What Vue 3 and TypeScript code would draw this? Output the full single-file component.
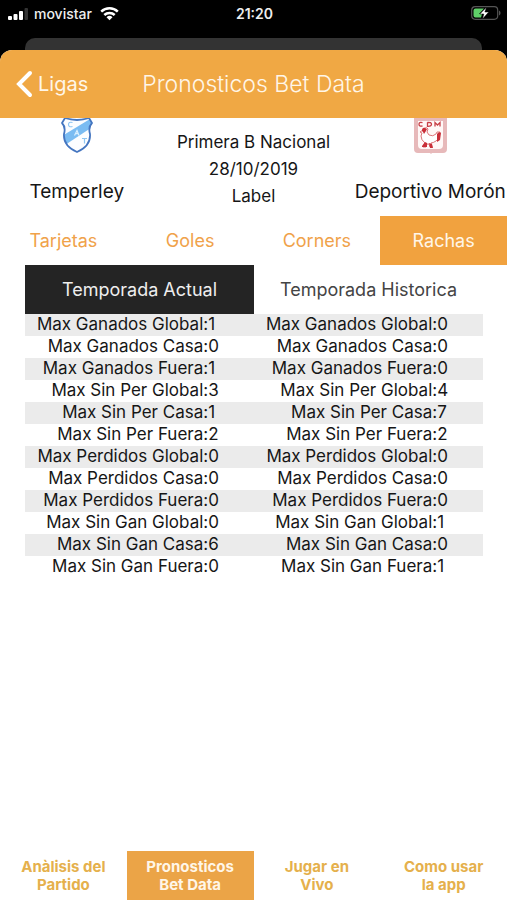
<script setup lang="ts">
import { ref } from 'vue'

interface Streak {
  name: string
  current: number
  historic: number
}

const tabs: string[] = ['Tarjetas', 'Goles', 'Corners', 'Rachas']
const activeTab = ref('Rachas')

const streaks: Streak[] = [
  { name: 'Max Ganados Global', current: 1, historic: 0 },
  { name: 'Max Ganados Casa', current: 0, historic: 0 },
  { name: 'Max Ganados Fuera', current: 1, historic: 0 },
  { name: 'Max Sin Per Global', current: 3, historic: 4 },
  { name: 'Max Sin Per Casa', current: 1, historic: 7 },
  { name: 'Max Sin Per Fuera', current: 2, historic: 2 },
  { name: 'Max Perdidos Global', current: 0, historic: 0 },
  { name: 'Max Perdidos Casa', current: 0, historic: 0 },
  { name: 'Max Perdidos Fuera', current: 0, historic: 0 },
  { name: 'Max Sin Gan Global', current: 0, historic: 1 },
  { name: 'Max Sin Gan Casa', current: 6, historic: 0 },
  { name: 'Max Sin Gan Fuera', current: 0, historic: 1 },
]

const sections: string[][] = [
  ['Anàlisis del', 'Partido'],
  ['Pronosticos', 'Bet Data'],
  ['Jugar en', 'Vivo'],
  ['Como usar', 'la app'],
]
const activeSection = ref(1)
</script>

<template>
  <div class="screen">
    <div class="status">
      <div class="carrier">
        <svg width="20" height="13" viewBox="0 0 20 13" aria-hidden="true">
          <rect x="0" y="9" width="4" height="4" rx="1" fill="#fff" />
          <rect x="5.500" y="7" width="4" height="6" rx="1" fill="#fff" />
          <rect x="11" y="4" width="4" height="9" rx="1" fill="#fff" />
          <rect x="16.500" y="1" width="3.500" height="12" rx="1" fill="#333" />
        </svg>
        <span class="operator">movistar</span>
        <svg width="19" height="15" viewBox="0 0 19 15" aria-hidden="true">
          <g fill="none" stroke="#fff" stroke-width="2.500">
            <path d="M1.200 5.600a12 12 0 0 1 16.600 0" />
            <path d="M4.300 9a7.500 7.500 0 0 1 10.400 0" />
          </g>
          <path d="M9.500 14.300 6.500 11.200a4.300 4.300 0 0 1 6 0z" fill="#fff" />
        </svg>
      </div>
      <span class="clock">21:20</span>
      <svg class="battery" width="30" height="14" viewBox="0 0 30 14" aria-hidden="true">
        <rect x=".700" y=".700" width="26" height="12.600" rx="3.500" fill="none" stroke="#555" stroke-width="1.200" />
        <path d="M28 4.500v5c2-.800 2-4.200 0-5z" fill="#555" />
        <path d="M4.500 2.500H13L8 8h3l-1 3.500H4.500a2 2 0 0 1-2-2v-5a2 2 0 0 1 2-2z" fill="#5fd068" />
        <path d="M15.500 1.200 8.800 8h4l-1.300 5L17.800 6h-3.900z" fill="#fff" stroke="#000" stroke-width=".500" />
      </svg>
    </div>
    <div class="backdrop"></div>

    <div class="sheet">
      <header class="bar">
        <a class="back" href="#ligas">
          <svg width="17" height="28" viewBox="0 0 17 28" aria-hidden="true">
            <path d="M14 3 3 14l11 11" fill="none" stroke="#fff" stroke-width="4" stroke-linecap="round" stroke-linejoin="miter" />
          </svg>
          <span>Ligas</span>
        </a>
        <h1>Pronosticos Bet Data</h1>
      </header>

      <section class="match">
        <div class="team">
          <svg width="34" height="36" viewBox="0 0 34 36" aria-hidden="true">
            <defs>
              <clipPath id="shield"><path d="M5 0Q17 4 29 0l3 5q-4 4-2 11 1 12-13 18Q3 28 4 16 6 9 2 5z" /></clipPath>
            </defs>
            <g clip-path="url(#shield)">
              <path d="M0-3h34v39H0z" fill="#fcfdff" />
              <path d="M2 18 30 1l4 7L5 27z" fill="#7bbcf2" />
            </g>
            <path d="M5 0Q17 4 29 0l3 5q-4 4-2 11 1 12-13 18Q3 28 4 16 6 9 2 5z" fill="none" stroke="#4576c0" stroke-width="1.800" stroke-linejoin="round" />
            <g fill="none" stroke-width="1.200">
              <path d="M12.500 4.500q-4-1-4 2t4 2M22 20.500h5m-2.500 0v5" stroke="#8fc6f3" />
              <path d="m14.500 17.500 2.500-5 2 5m-3.600-1.800h3" stroke="#d9efff" />
            </g>
          </svg>
          <span class="name">Temperley</span>
        </div>
        <div class="details">
          <span>Primera B Nacional</span>
          <span>28/10/2019</span>
          <span>Label</span>
        </div>
        <div class="team">
          <svg width="34" height="36" viewBox="0 0 34 36" aria-hidden="true">
            <path d="M1 0h33v31q0 4-4 4H19l-1 1-1-1H5q-4 0-4-4z" fill="#e7b9ba" />
            <path d="M5 3h25v24q0 4-4 4H9q-4 0-4-4z" fill="#fff8f7" />
            <g fill="none" stroke="#c83e45" stroke-width="1.300">
              <path d="M9.500 4.700q-3.500-1-3.500 1.500t3.500 1.800M14.500 4.300v4q4 .2 4-2t-4-2M22 8.500V4.500l2.500 2.500L27 4.500v4" />
            </g>
            <path d="M10 12q0-2 2-2 2-1 3 1l-1 3 2 3q4 2 7-1 0-3 4-2l-1 6-3 3q-3 2-5 2l1 4h-2l-1-3h-2l-1 3h-3l2-4q-4-3-4-7l1-3-2-1z" fill="#fff" stroke="#d8676a" stroke-width=".900" />
            <path d="M9 13q0-4 3-3l2 1-1 2-2 3-1-2zM24 16q2-3 4-1l-1 7-3 2zM9 28l3-4 2 1v4H9zM16 25l3 1 1 4h-3z" fill="#c92f38" />
          </svg>
          <span class="name">Deportivo Morón</span>
        </div>
      </section>

      <nav class="tabs">
        <button
          v-for="tab in tabs"
          :key="tab"
          type="button"
          :class="{ active: tab === activeTab }"
          @click="activeTab = tab"
        >{{ tab }}</button>
      </nav>

      <table class="streaks">
        <colgroup>
          <col class="label-col" /><col class="value-col" />
          <col class="label-col" /><col class="value-col" />
        </colgroup>
        <thead>
          <tr>
            <th class="selected" colspan="2" scope="colgroup">Temporada Actual</th>
            <th colspan="2" scope="colgroup">Temporada Historica</th>
          </tr>
        </thead>
        <tbody>
          <tr v-for="row in streaks" :key="row.name">
            <td class="label">{{ row.name }}:</td>
            <td>{{ row.current }}</td>
            <td class="label">{{ row.name }}:</td>
            <td>{{ row.historic }}</td>
          </tr>
        </tbody>
      </table>

      <nav class="sections">
        <button
          v-for="(lines, i) in sections"
          :key="i"
          type="button"
          :class="{ active: i === activeSection }"
          @click="activeSection = i"
        ><span v-for="line in lines" :key="line">{{ line }}</span></button>
      </nav>
    </div>
  </div>
</template>

<style>
body {
  background: #000;
}
</style>

<style scoped>
.screen {
  display: flex;
  flex-direction: column;
  min-height: 100vh;
  background: #000;
  color: #161616;
  font-family: Inter, "Liberation Sans", sans-serif;
}
.status {
  display: grid;
  grid-template-columns: 1fr auto 1fr;
  align-items: center;
  height: 26px;
  padding: 0 6px 0 8px;
  color: #eee;
  font-size: 14px;
  font-weight: 500;
}
.carrier {
  display: flex;
  align-items: center;
  gap: 6px;
}
.operator {
  min-width: 60px;
}
.clock {
  font-weight: 600;
}
.battery {
  justify-self: end;
}
.backdrop {
  height: 12px;
  margin: 12px 25px 0;
  border-radius: 10px 10px 0 0;
  background: #333;
}
.sheet {
  display: flex;
  flex: 1;
  flex-direction: column;
  overflow: hidden;
  border-radius: 12px 12px 0 0;
  background: #fff;
}
.bar {
  display: grid;
  grid-template-columns: 1fr auto 1fr;
  align-items: center;
  height: 68px;
  padding: 0 16px;
  background: #f0a844;
  color: #fff6e8;
}
.back {
  display: flex;
  align-items: center;
  gap: 5px;
  color: inherit;
  font-size: 20px;
  text-decoration: none;
}
h1 {
  margin: 0;
  font-size: 23px;
  font-weight: 300;
}
.match {
  display: grid;
  grid-template-columns: 1fr 200px 1fr;
  height: 98px;
}
.team {
  display: flex;
  flex-direction: column;
  align-items: center;
  gap: 26px;
  white-space: nowrap;
}
.name {
  font-size: 19px;
  line-height: 24px;
}
.details {
  display: flex;
  flex-direction: column;
  align-items: center;
  padding-top: 11px;
  font-size: 17px;
  line-height: 27px;
}
button {
  margin: 0;
  padding: 0;
  border: 0;
  background: none;
  font-family: inherit;
  cursor: pointer;
}
.tabs {
  display: grid;
  grid-template-columns: repeat(4, 1fr);
  height: 49px;
}
.tabs button {
  color: #f0a24a;
  font-size: 18px;
}
.tabs .active {
  background: #f1a23f;
  color: #fff6e8;
}
.streaks {
  margin: 0 24px 0 25px;
  border-collapse: collapse;
  table-layout: fixed;
  font-size: 17px;
  line-height: 20px;
}
.label-col {
  width: 40%;
}
.value-col {
  width: 10%;
}
th {
  height: 49px;
  padding: 0;
  color: #444;
  font-size: 18px;
  font-weight: 400;
}
.selected {
  background: #242424;
  color: #eee;
}
td {
  height: 22px;
  padding: 0;
  vertical-align: top;
}
.label {
  text-align: right;
  white-space: nowrap;
}
tbody tr:nth-child(odd) {
  background: #ebebeb;
}
.sections {
  display: grid;
  grid-template-columns: repeat(4, 1fr);
  height: 49px;
  margin-top: auto;
}
.sections button {
  display: flex;
  flex-direction: column;
  align-items: center;
  justify-content: center;
  color: #e5b04c;
  font-size: 15px;
  font-weight: 700;
  line-height: 18px;
}
.sections .active {
  background: #eba447;
  color: #fff6e8;
}
</style>
